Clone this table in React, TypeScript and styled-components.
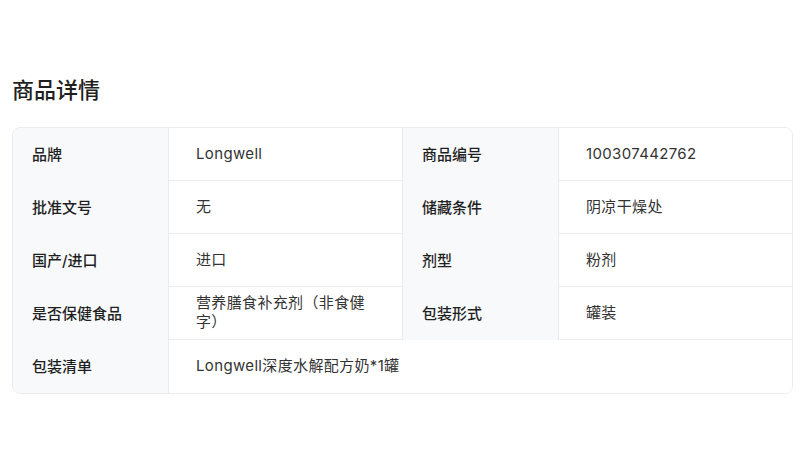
import React from "react";
import styled, { createGlobalStyle } from "styled-components";

const GlobalStyle = createGlobalStyle`
  html, body {
    margin: 0;
    padding: 0;
    background: #ffffff;
  }
  body {
    font-family: Inter, "Noto Sans CJK SC", sans-serif;
    color: #333;
  }
`;

const Page = styled.div`
  padding: 74px 13px 0 12px;
`;

const Title = styled.h2`
  margin: 0 0 21px 0;
  font-size: 22px;
  line-height: 32px;
  font-weight: 500;
  color: #1f1f1f;
`;

const Card = styled.div`
  display: grid;
  grid-template-columns: 156px 234px 156px 1fr;
  border: 1px solid #ececec;
  border-radius: 8px;
  overflow: hidden;
`;

const Label = styled.div`
  display: flex;
  align-items: center;
  box-sizing: border-box;
  min-height: 53px;
  padding: 0 18px 2px 19px;
  background: #f8f9fb;
  border-right: 1px solid #ececec;
  font-size: 15px;
  font-weight: 500;
  color: #1f1f1f;
`;

const Value = styled.div<{ $last?: boolean; $span?: number; $edge?: boolean }>`
  display: flex;
  align-items: center;
  box-sizing: border-box;
  min-height: 53px;
  padding: 0 30px 2px 27px;
  background: #fff;
  border-bottom: ${(p) => (p.$last ? "none" : "1px solid #ececec")};
  border-right: ${(p) => (p.$edge ? "none" : "1px solid #ececec")};
  grid-column: ${(p) => (p.$span ? `span ${p.$span}` : "auto")};
  font-size: 15px;
  line-height: 19px;
  letter-spacing: 0.35px;
  color: #333;
`;

type Pair = { label: string; value: string };

const rows: [Pair, Pair][] = [
  [
    { label: "品牌", value: "Longwell" },
    { label: "商品编号", value: "100307442762" },
  ],
  [
    { label: "批准文号", value: "无" },
    { label: "储藏条件", value: "阴凉干燥处" },
  ],
  [
    { label: "国产/进口", value: "进口" },
    { label: "剂型", value: "粉剂" },
  ],
  [
    { label: "是否保健食品", value: "营养膳食补充剂（非食健字）" },
    { label: "包装形式", value: "罐装" },
  ],
];

export default function App() {
  return (
    <>
      <GlobalStyle />
      <Page>
        <Title>商品详情</Title>
        <Card>
          {rows.map(([a, b]) => (
            <React.Fragment key={a.label}>
              <Label>{a.label}</Label>
              <Value>{a.value}</Value>
              <Label>{b.label}</Label>
              <Value $edge>{b.value}</Value>
            </React.Fragment>
          ))}
          <Label>包装清单</Label>
          <Value $last $edge $span={3}>
            Longwell深度水解配方奶*1罐
          </Value>
        </Card>
      </Page>
    </>
  );
}
